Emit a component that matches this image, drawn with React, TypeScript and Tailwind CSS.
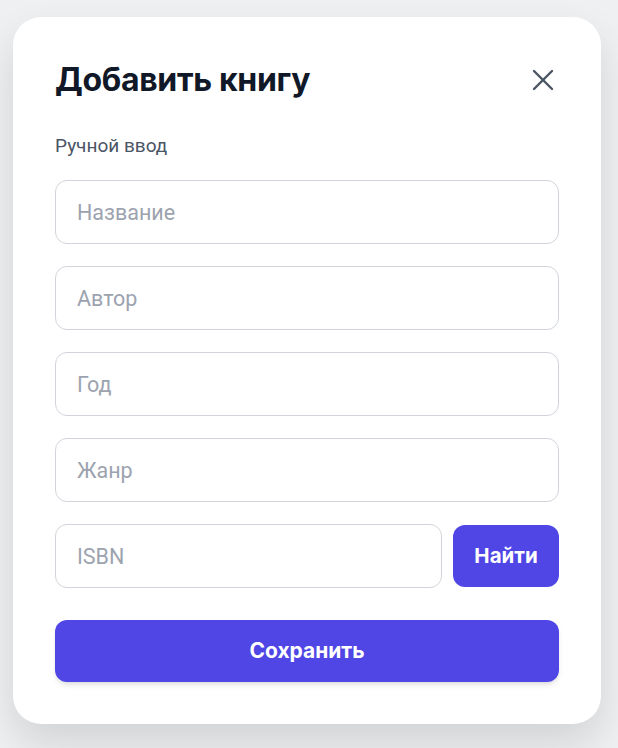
import { X } from "lucide-react";

const fields = ["Название", "Автор", "Год", "Жанр"];

export default function App() {
  return (
    <div className="min-h-screen bg-[#eff0f2] pt-[17px] pl-[13px] pr-[17px]" style={{ fontFamily: "Roboto, sans-serif" }}>
      <div className="rounded-[28px] bg-white px-[42px] pt-[42px] pb-[42px] shadow-[0_20px_40px_rgba(0,0,0,0.12)]">
        {/* Header */}
        <div className="flex h-[42px] items-center justify-between">
          <h1 className="font-['Inter',sans-serif] text-[32px] font-bold tracking-[-0.01em] text-[#111827]">
            Добавить книгу
          </h1>
          <button className="-mr-[2px] text-[#4b5563]">
            <X className="h-9 w-9" strokeWidth={1.6} />
          </button>
        </div>

        <p className="mt-[33px] text-[19px] leading-6 text-[#4a5565]">Ручной ввод</p>

        <div className="mt-[22px] flex flex-col gap-[22px]">
          {fields.map((f) => (
            <input
              key={f}
              placeholder={f}
              className="h-16 w-full rounded-xl border border-[#d1d5db] px-[21px] text-[21.5px] text-gray-900 placeholder:text-[#9ca3af] outline-none"
            />
          ))}
          <div className="flex gap-[11px]">
            <input
              placeholder="ISBN"
              className="h-16 min-w-0 flex-1 rounded-xl border border-[#d1d5db] px-[21px] text-[21.5px] text-gray-900 placeholder:text-[#9ca3af] outline-none"
            />
            <button className="my-px h-[62px] w-[106px] rounded-xl bg-[#4f46e5] font-['Inter',sans-serif] text-[20.5px] font-bold text-white">
              Найти
            </button>
          </div>
        </div>

        <button className="mt-8 h-[62px] w-full rounded-xl bg-[#4f46e5] font-['Inter',sans-serif] text-[21px] font-bold text-white shadow-md">
          Сохранить
        </button>
      </div>
    </div>
  );
}
